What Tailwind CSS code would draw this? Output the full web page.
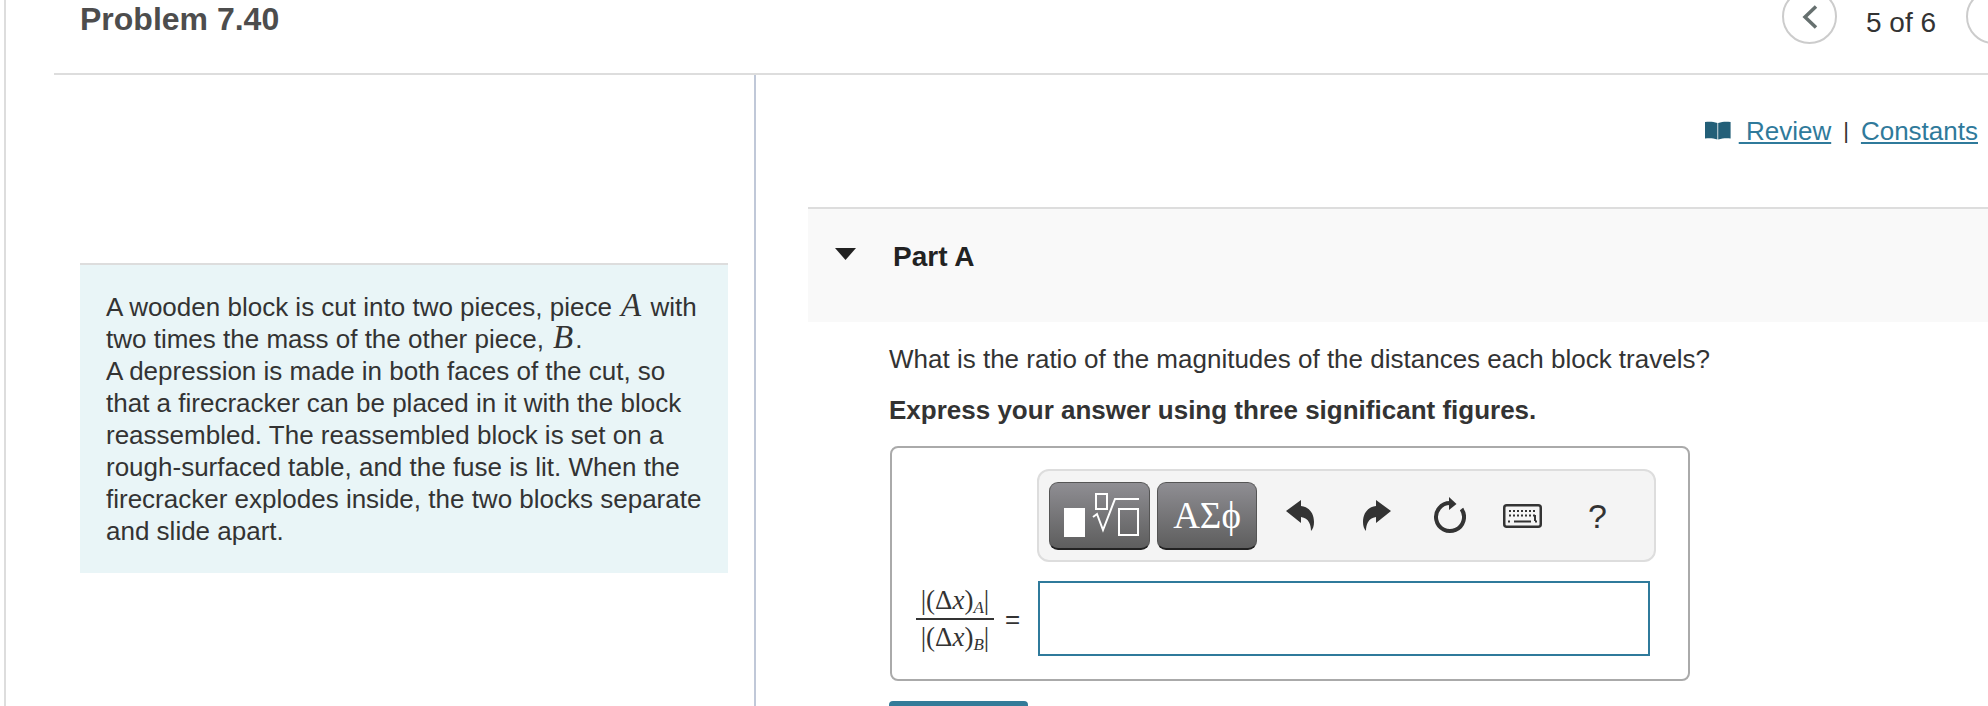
<!DOCTYPE html>
<html lang="en">
<head>
  <meta charset="UTF-8">
  <title>Problem 7.40</title>
  <script src="https://cdn.jsdelivr.net/npm/@tailwindcss/browser@4"></script>
</head>
<body class="bg-white h-[706px] overflow-hidden font-['Liberation_Sans',Arial,sans-serif] text-[#333]">
  <div class="ml-[4px] h-[706px] overflow-hidden border-l-2 border-[#ddd] pl-[48px] flex flex-col">

    <!-- header -->
    <div class="h-[75px] shrink-0 border-b-2 border-[#ddd] flex items-start justify-between pl-[26px] overflow-hidden">
      <h1 class="text-[32px] leading-[38px] font-bold text-[#4d4d4d]">Problem 7.40</h1>
      <div class="flex items-center -mt-[11px] w-[206px] shrink-0">
        <button class="w-[55px] h-[55px] rounded-full border-2 border-[#ccc] flex items-center justify-center shrink-0">
          <svg width="16" height="24" viewBox="0 0 16 24" fill="none" stroke="#66706f" stroke-width="3.5"><path d="M14 1.500 3 12l11 10.500"/></svg>
        </button>
        <span class="ml-[29px] text-[28px] leading-none mt-[13px] whitespace-nowrap">5 of 6</span>
        <button class="ml-[30px] w-[55px] h-[55px] rounded-full border-2 border-[#ccc] shrink-0"></button>
      </div>
    </div>

    <div class="flex flex-1 min-h-0">
      <!-- left column -->
      <div class="w-[702px] shrink-0 border-r-2 border-[#c0c8d8] pl-[26px] pt-[188px]">
        <div class="w-[648px] h-[310px] bg-[#e9f5f7] border-t-2 border-[#ddd] pl-[26px] pr-[20px] pt-[26px] text-[26px] leading-[32px]">
          A wooden block is cut into two pieces, piece <i class="font-['Liberation_Serif',serif] text-[33px] leading-[0] mx-[2px]">A</i> with two times the mass of the other piece, <i class="font-['Liberation_Serif',serif] text-[33px] leading-[0] mx-[2px]">B</i>.<br>
          A depression is made in both faces of the cut, so that a firecracker can be placed in it with the block reassembled. The reassembled block is set on a rough-surfaced table, and the fuse is lit. When the firecracker explodes inside, the two blocks separate and slide apart.
        </div>
      </div>

      <!-- right column -->
      <div class="flex-1 min-w-0 pl-[52px]">
        <div class="h-[132px] flex items-start justify-end gap-[8px] pt-[41px] pr-[10px] text-[26px] leading-[30px]">
          <svg class="mt-[5px]" width="26" height="20" viewBox="0 0 26 20" fill="#235f78"><path d="M0 1c4-.6 8-.6 12.400 1v16.500C8 17 4 17 0 17.500zM25.600 1c-4-.6-8-.6-12.400 1v16.500C18 17 22 17 25.600 17.500z"/></svg>
          <a class="text-[#2f7a9b] underline whitespace-pre"> Review</a>
          <span class="mx-[4px] text-[22px]">|</span>
          <a class="text-[#2f7a9b] underline">Constants</a>
        </div>

        <div class="h-[115px] bg-[#f9f9f9] border-t-2 border-[#ddd] flex items-start pt-[33px] pl-[27px]">
          <svg class="mt-[6px]" width="21" height="12" viewBox="0 0 21 12" fill="#222"><path d="M0 0h21L10.500 12z"/></svg>
          <h2 class="ml-[37px] text-[28px] leading-[30px] font-bold text-[#222]">Part A</h2>
        </div>

        <div class="pl-[81px]">
          <p class="mt-[21px] text-[26px] leading-[32px]">What is the ratio of the magnitudes of the distances each block travels?</p>
          <p class="mt-[19px] text-[26px] leading-[32px] font-bold">Express your answer using three significant figures.</p>

          <div class="mt-[20px] ml-[1px] w-[800px] h-[235px] border-2 border-[#aaa] rounded-[8px]">
            <!-- toolbar -->
            <div class="ml-[145px] mt-[21px] w-[619px] h-[93px] bg-[#f4f4f4] border-2 border-[#ddd] rounded-[12px] flex items-center pl-[10px]">
              <button class="w-[101px] h-[68px] rounded-[9px] bg-linear-to-b from-[#8f8e93] to-[#5e5e5e] border border-[#555] border-b-2 border-b-[#222] shrink-0">
                <svg width="99" height="65" viewBox="0 0 99 65" fill="none" stroke="#fff" stroke-width="2"><path fill="#fff" stroke="none" d="M14 25h21v29H14z"/><path d="M46 11h11v15H46zM43 34l4-3 6 16 12-31h24M69 26h19v26H69z"/></svg>
              </button>
              <button class="ml-[7px] w-[100px] h-[68px] rounded-[9px] bg-linear-to-b from-[#8f8e93] to-[#5e5e5e] border border-[#555] border-b-2 border-b-[#222] text-white font-['Liberation_Serif',serif] text-[37px] leading-none shrink-0">ΑΣϕ</button>
              <svg class="ml-[29px] shrink-0" width="28" height="31" viewBox="0 0 28 31" fill="#333"><path d="M0 11 15 0v6c8 1 13 7 13 16 0 4-1 7-3 9 0-6-2-13-10-14v6z"/></svg>
              <svg class="ml-[49px] shrink-0" width="28" height="31" viewBox="0 0 28 31" fill="#333"><path d="M28 11 13 0v6C5 7 0 13 0 22c0 4 1 7 3 9 0-6 2-13 10-14v6z"/></svg>
              <svg class="ml-[42px] shrink-0" width="33" height="37" viewBox="0 0 33 37" fill="none" stroke="#333" stroke-width="4"><path d="M17 6a14 14 0 1 0 11.500 6"/><path fill="#333" stroke="none" d="M16 0l7.500 7L16 13z"/></svg>
              <svg class="ml-[37px] shrink-0" width="39" height="24" viewBox="0 0 39 24" fill="none"><rect x="1.250" y="1.250" width="36.500" height="21.500" rx="2.500" fill="#f4f4f4" stroke="#333" stroke-width="2.500"/><path stroke="#333" stroke-width="2" stroke-dasharray="2 2" d="M6 7h27M6 11.500h27"/><path stroke="#333" stroke-width="2" d="M5 17.500h2M11 17.500h17M32 17.500h2M32 11v6"/></svg>
              <span class="ml-[46px] text-[34px] leading-none shrink-0 text-[#333]">?</span>
            </div>

            <!-- answer row -->
            <div class="flex items-center mt-[19px] ml-[24px]">
              <div class="w-[78px] shrink-0 text-center font-['Liberation_Serif',serif] text-[27px] leading-[32px] text-[#333]">
                <div class="border-b-2 border-[#333] pb-[2px] whitespace-nowrap">|(Δ<i>x</i>)<sub class="italic text-[17px] leading-none">A</sub>|</div>
                <div class="pt-[1px] whitespace-nowrap">|(Δ<i>x</i>)<sub class="italic text-[17px] leading-none">B</sub>|</div>
              </div>
              <span class="ml-[11px] text-[26px] leading-none">=</span>
              <div class="ml-[18px] w-[612px] h-[75px] border-2 border-[#2f7a9b] bg-white shrink-0"></div>
            </div>
          </div>

          <button class="mt-[20px] w-[139px] h-[5px] rounded-t-[4px] bg-[#337b99] block"></button>
        </div>
      </div>
    </div>
  </div>
</body>
</html>
